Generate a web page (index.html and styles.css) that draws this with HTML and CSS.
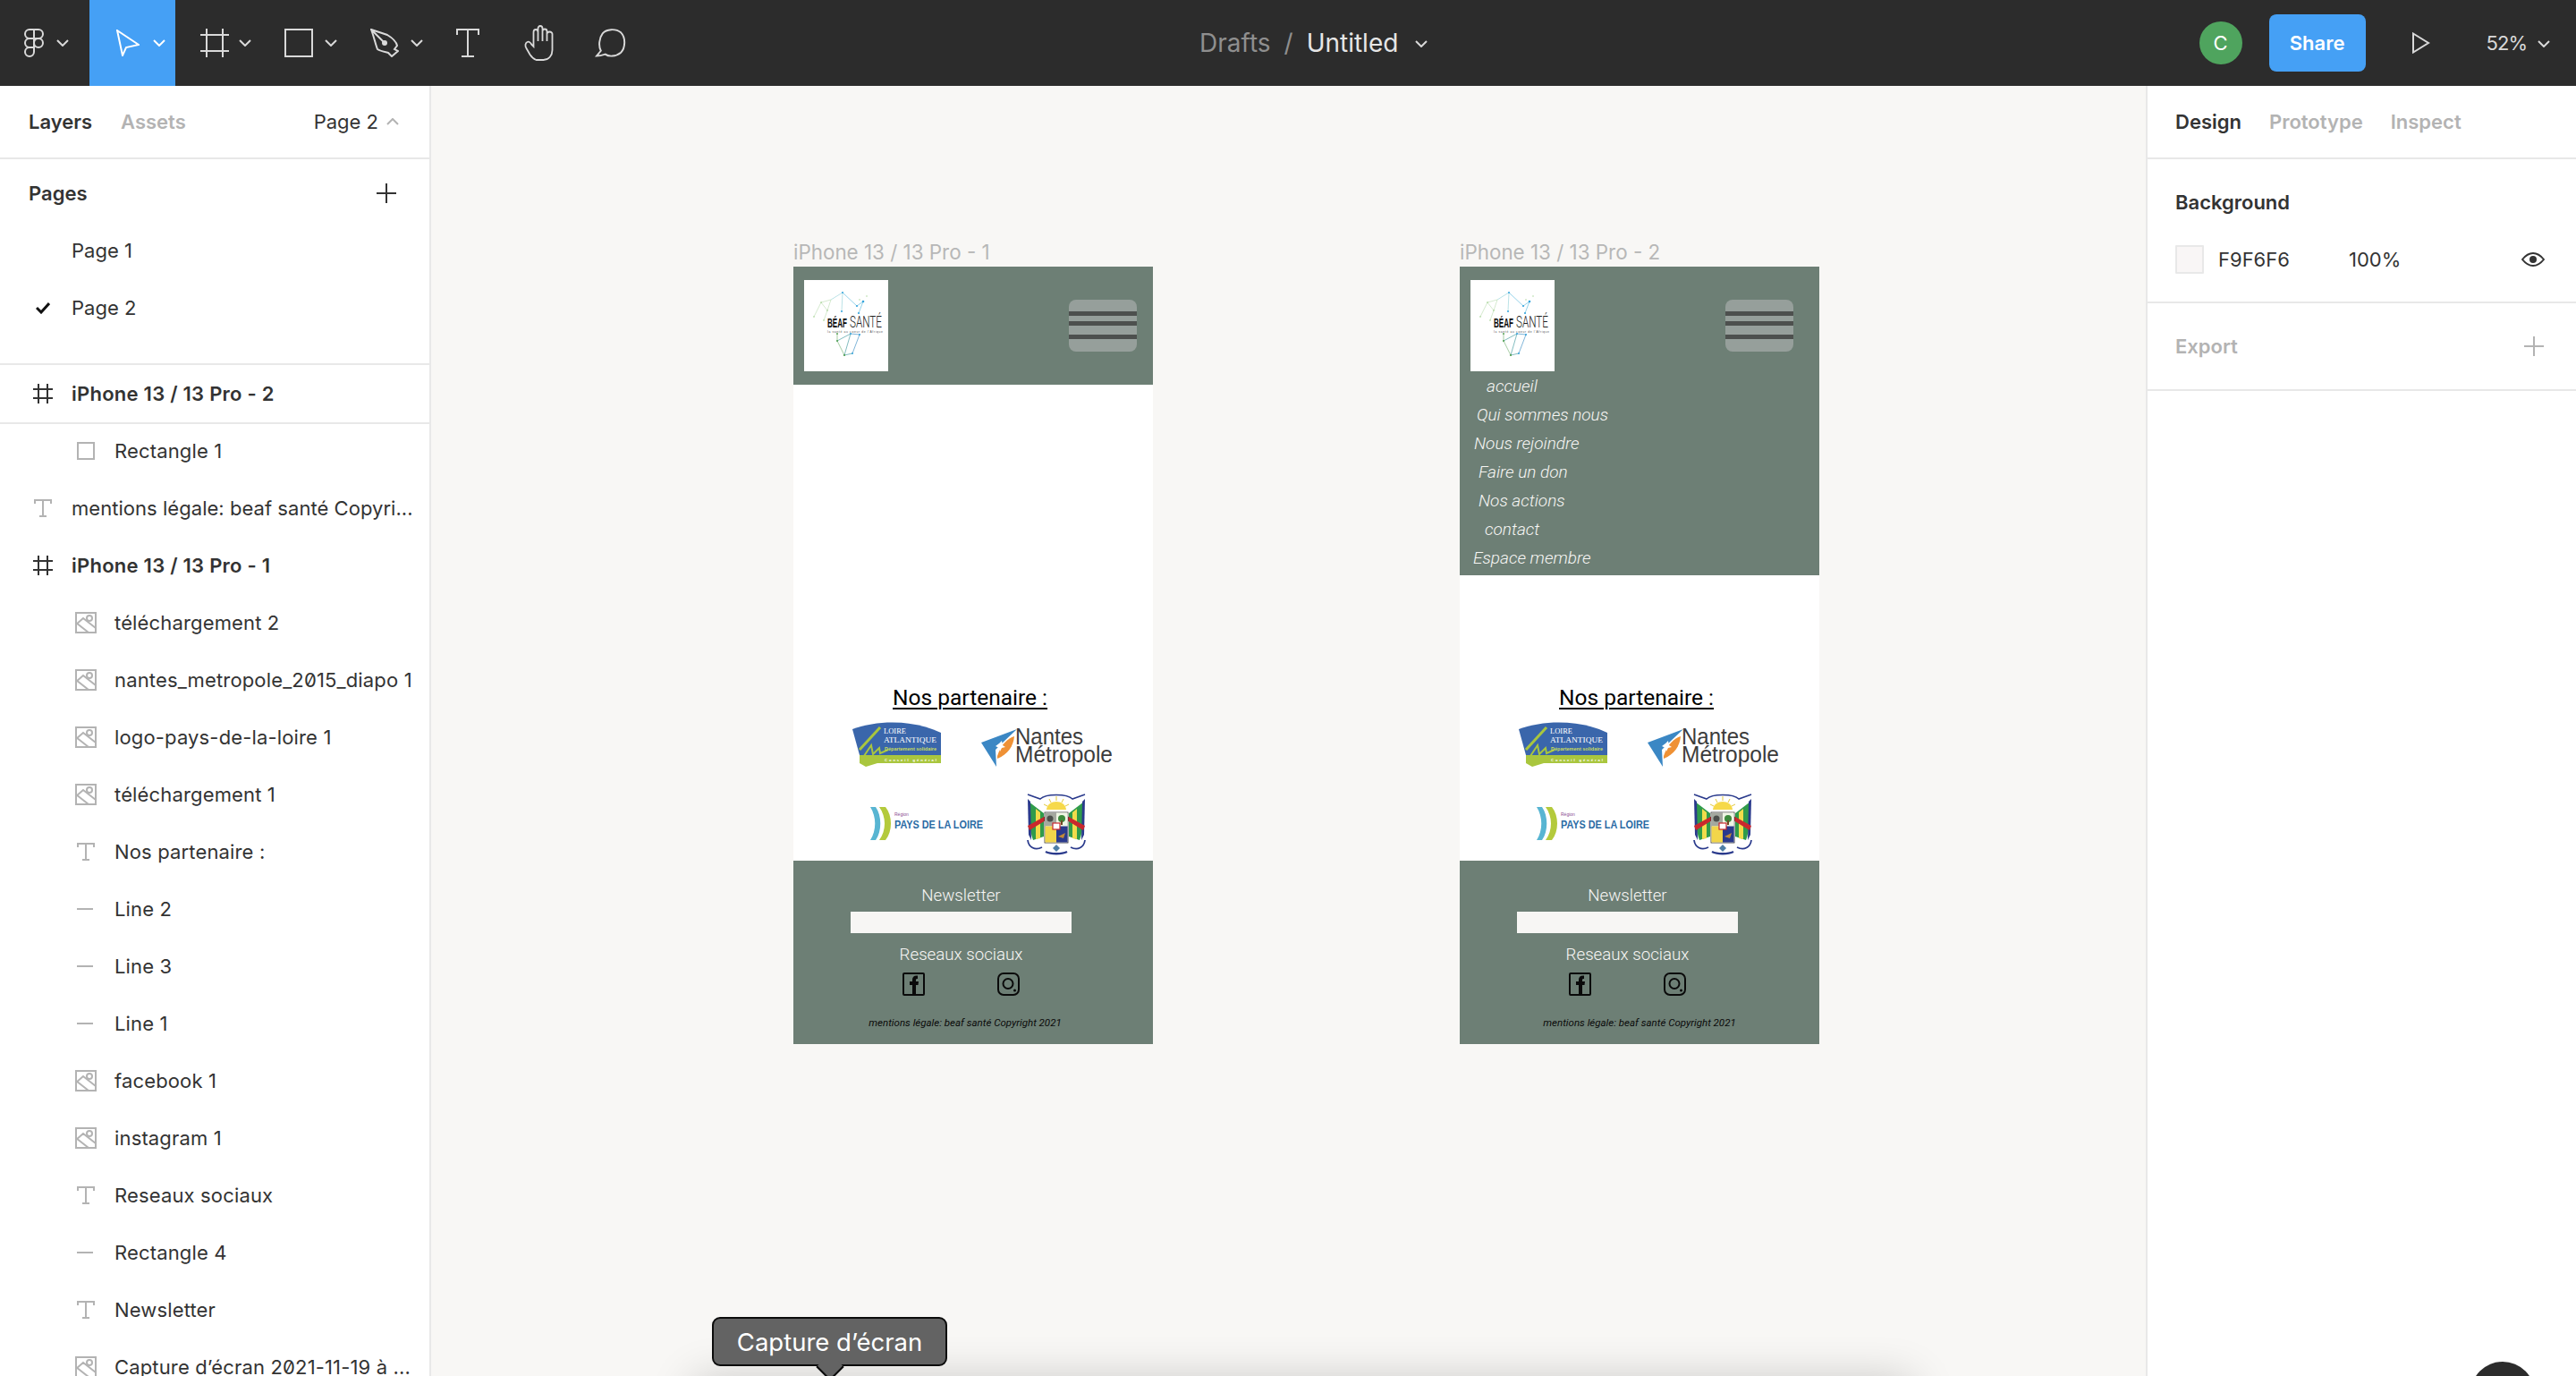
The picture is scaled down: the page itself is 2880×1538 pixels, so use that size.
FILE: index.html
```html
<!DOCTYPE html>
<html lang="fr">
<head>
<meta charset="utf-8">
<title>Untitled - Figma</title>
<link rel="stylesheet" href="styles.css">
</head>
<body>
<svg class="defs" width="0" height="0" aria-hidden="true">
  <defs>
    <symbol id="beaf" viewBox="0 0 94 102">
      <g fill="none" stroke-width=".6">
        <path stroke="#b9dcae" d="M11 41 19 25 30 22 26 34 22 45M19 25 26 34"/>
        <path stroke="#8fd0d6" d="M30 22 43 14 42 35"/>
        <path stroke="#4fb5dc" d="M43 14 59 29 66 24 61 37"/>
        <path stroke="#6bab6a" d="M37 60 37 68 45 84"/>
        <path stroke="#2f8f93" d="M37 68 52 60 45 84 54 82"/>
        <path stroke="#2a83bd" d="M52 60 62 61 54 82"/>
      </g>
      <g fill="#9ed08a">
        <circle cx="11" cy="41" r=".8"/><circle cx="19" cy="25" r=".8"/><circle cx="26" cy="34" r=".8"/><circle cx="22" cy="45" r=".8"/><circle cx="62" cy="22" r=".7"/><circle cx="70" cy="18" r=".7"/>
      </g>
      <g fill="#36a4dc">
        <circle cx="43" cy="14" r="1"/><circle cx="42" cy="35" r="1"/><circle cx="59" cy="29" r="1.1"/><circle cx="66" cy="24" r="1.3"/><circle cx="61" cy="37" r="1.1"/><circle cx="52" cy="60" r="1"/><circle cx="62" cy="61" r="1.1"/><circle cx="54" cy="82" r="1"/>
      </g>
      <g fill="#4e9d4c">
        <circle cx="37" cy="60" r=".9"/><circle cx="37" cy="68" r="1"/><circle cx="45" cy="84" r="1.1"/>
      </g>
      <text class="logo-bold" x="26" y="52.5" font-size="15.500" textLength="22" lengthAdjust="spacingAndGlyphs">BÉAF</text>
      <text class="logo-light" x="51" y="52.5" font-size="17.500" textLength="36" lengthAdjust="spacingAndGlyphs">SANTÉ</text>
      <text class="logo-tiny" x="26" y="58.5" font-size="3.4" textLength="62">la santé au coeur de l'Afrique</text>
    </symbol>

    <symbol id="menu-icon" viewBox="0 0 76 58">
      <rect width="76" height="58" rx="8" fill="#969f9b"/>
      <rect y="13" width="76" height="5" fill="#4d504e"/>
      <rect y="24" width="76" height="5" fill="#4d504e"/>
      <rect y="39" width="76" height="5" fill="#4d504e"/>
    </symbol>

    <symbol id="loire" viewBox="0 0 99 50">
      <path fill="#3a66ab" d="M0 8C30 -3 70 -2 99 12V37H8Z"/>
      <path fill="#a9c63e" d="M8 37H99V46H28L15 50 8 46Z"/>
      <path fill="none" stroke="#a9c63e" stroke-width="3" d="M31 6 8 31"/>
      <path fill="none" stroke="#a9c63e" stroke-width="2" d="M13 38 21 26 23 36 30 29 31 35 40 31"/>
      <text class="logo-serif" x="35" y="13" font-size="8.500">LOIRE</text>
      <text class="logo-serif" x="35" y="23" font-size="8.500" textLength="59" lengthAdjust="spacingAndGlyphs">ATLANTIQUE</text>
      <text class="logo-green" x="36" y="31.500" font-size="5" textLength="58" lengthAdjust="spacingAndGlyphs">Département solidaire</text>
      <text class="logo-white-b" x="36" y="44" font-size="4.200" textLength="58">Conseil général</text>
    </symbol>

    <symbol id="nantes" viewBox="0 0 147 45">
      <path fill="#3b87c4" d="M0 18 40 3 24 18 16 26 17 45Z"/>
      <path fill="#ef9135" d="M18 33C22 20 30 13 37 11 36 22 30 31 18 36Z"/>
      <path fill="#fff" d="M20 19 23 16 24 21 27 23 23 24 21 28 20 24 16 22Z"/>
      <text class="logo-sans" x="38" y="20" font-size="26" textLength="76" lengthAdjust="spacingAndGlyphs">Nantes</text>
      <text class="logo-sans" x="38" y="40" font-size="26" textLength="109" lengthAdjust="spacingAndGlyphs">Métropole</text>
    </symbol>

    <symbol id="pays" viewBox="0 0 126 37">
      <path fill="#58b5d2" d="M0 0H6C13 10 13 27 6 37H0C7 26 7 11 0 0Z"/>
      <path fill="#b4ca3c" d="M10 0H17C25 10 25 27 17 37H10C18 26 18 11 10 0Z"/>
      <text class="logo-purple" x="27" y="10" font-size="5">Région</text>
      <text class="logo-blue" x="27" y="24" font-size="12.500" textLength="99" lengthAdjust="spacingAndGlyphs">PAYS DE LA LOIRE</text>
    </symbol>

    <symbol id="arms" viewBox="0 0 72 71">
      <path fill="none" stroke="#2a3a8c" stroke-width="1.600" d="M4 3 18 8C24 2 48 2 54 8L68 3"/>
      <path fill="#f6d94a" d="M25 20C26 8 46 8 47 20Z"/>
      <path fill="none" stroke="#e3c93c" stroke-width="1" d="M36 5V10M28 8 30 12M44 8 42 12M22 14 26 16M50 14 46 16"/>
      <path fill="#2f9b4b" d="M5 11 22 24V50L10 54C6 44 5 26 5 11Z"/>
      <path fill="#f1dc4b" d="M13 19 18 23V52L13 53Z"/>
      <path fill="#2a3a8c" d="M4 8 7 11 8 54 5 48Z"/>
      <path fill="#2f9b4b" d="M67 11 50 24V50L62 54C66 44 67 26 67 11Z"/>
      <path fill="#f1dc4b" d="M59 19 54 23V52L59 53Z"/>
      <path fill="#2a3a8c" d="M68 8 65 11 64 54 67 48Z"/>
      <path fill="#c9282d" d="M4 38 24 27V32L6 43ZM68 38 48 27V32L66 43Z"/>
      <rect x="23" y="23" width="26" height="34" fill="#fff" stroke="#2b2b2b" stroke-width=".8"/>
      <rect x="23.500" y="23.500" width="12.500" height="15" fill="#a4a89f"/>
      <rect x="36" y="23.500" width="12.500" height="15" fill="#eef5e4"/>
      <rect x="23.500" y="38.500" width="12.500" height="18" fill="#f2d64a"/>
      <rect x="36" y="38.500" width="12.500" height="18" fill="#2a3a8c"/>
      <circle cx="29" cy="30" r="3.500" fill="#4c4f4c"/>
      <circle cx="42" cy="30" r="4" fill="#3d8b3d"/>
      <rect x="41" y="32" width="2" height="5" fill="#6d4a23"/>
      <rect x="32" y="35" width="8" height="7" fill="#fff" stroke="#c9282d" stroke-width="1.200"/>
      <path fill="#c08a38" d="M38 50 46 46 44 52Z"/>
      <path fill="none" stroke="#2a3a8c" stroke-width="1.800" d="M4 54C5 62 12 66 20 62M68 54C67 62 60 66 52 62"/>
      <path fill="none" stroke="#2a3a8c" stroke-width="2.400" d="M24 67C30 70 42 70 48 67"/>
      <path fill="#4f7fa6" d="M36 59 40 63 36 67 32 63Z"/>
    </symbol>

    <symbol id="ic-image" viewBox="0 0 24 24">
      <path fill="none" stroke="#b3b3b3" stroke-width="2" d="M1 1H23V23H1ZM1 12 15 23M1 14 9 7 23 18"/>
      <circle cx="16" cy="7" r="3" fill="none" stroke="#b3b3b3" stroke-width="2"/>
    </symbol>
    <symbol id="ic-t" viewBox="0 0 20 20">
      <path fill="none" stroke="#b3b3b3" stroke-width="2" d="M1 5V1H19V5M10 1V19M6 19H14"/>
    </symbol>
    <symbol id="ic-frame" viewBox="0 0 22 22">
      <path fill="none" stroke="#333" stroke-width="2" d="M6 0V22M16 0V22M0 6H22M0 16H22"/>
    </symbol>
    <symbol id="ic-line" viewBox="0 0 20 4">
      <rect y="1" width="18" height="2" fill="#b3b3b3"/>
    </symbol>
    <symbol id="chev" viewBox="0 0 14 8">
      <path fill="none" stroke="currentColor" stroke-width="2" d="M1 1 7 7 13 1"/>
    </symbol>
  </defs>
</svg>

<div class="app">
  <header class="topbar">
    <div class="tools">
      <div class="tool tool-logo">
        <svg class="ic" width="22" height="32" viewBox="0 0 22 32"><path fill="none" stroke="#d9d9d9" stroke-width="2" d="M11 1H6a5 5 0 0 0 0 10h5zM11 1h5a5 5 0 0 1 0 10h-5zM11 11H6a5 5 0 0 0 0 10h5zM21 16a5 5 0 1 1-10 0 5 5 0 0 1 10 0zM11 21H6a5 5 0 1 0 5 5z"/></svg>
        <svg class="chev" width="14" height="8"><use href="#chev"/></svg>
      </div>
      <div class="tool tool-move">
        <svg class="ic" width="26" height="30" viewBox="0 0 26 30"><path fill="none" stroke="#fff" stroke-width="2" d="M1 1 25 17 11 20 7 29Z"/></svg>
        <svg class="chev" width="14" height="8"><use href="#chev"/></svg>
      </div>
      <div class="tool tool-frame">
        <svg class="ic" width="32" height="32" viewBox="0 0 32 32"><path fill="none" stroke="#d9d9d9" stroke-width="2" d="M7 0V32M25 0V32M0 7H32M0 25H32"/></svg>
        <svg class="chev" width="14" height="8"><use href="#chev"/></svg>
      </div>
      <div class="tool">
        <svg class="ic" width="32" height="32" viewBox="0 0 32 32"><rect x="1" y="1" width="30" height="30" fill="none" stroke="#d9d9d9" stroke-width="2"/></svg>
        <svg class="chev" width="14" height="8"><use href="#chev"/></svg>
      </div>
      <div class="tool">
        <svg class="ic" width="32" height="32" viewBox="0 0 32 32"><path fill="none" stroke="#d9d9d9" stroke-width="2" d="M1 1 19 7C24 10 29 14 30 19L27 23 31 25 24 31 20 27C16 26 11 25 8 23 6 18 4 9 1 1ZM1 1 15 15"/><circle cx="16" cy="16" r="3" fill="#d9d9d9"/></svg>
        <svg class="chev" width="14" height="8"><use href="#chev"/></svg>
      </div>
      <div class="tool tool-text">
        <svg class="ic" width="26" height="32" viewBox="0 0 26 32"><path fill="none" stroke="#d9d9d9" stroke-width="2" d="M1 7V1H25V7M13 1V31M6 31H20"/></svg>
      </div>
      <div class="tool tool-hand">
        <svg class="ic" width="35" height="40" viewBox="0 0 32 40"><path fill="none" stroke="#d9d9d9" stroke-width="1.800" d="M13 39C10 38 8 36 6 33L2 26C0 23 1 20 3 19 5 18 7 20 8 22L10 24V8C10 6 11 5 12.500 5 14 5 15 6 15 8V4C15 2 16 1 17.500 1 19 1 20 2 20 4V7C20 5.500 21 4.500 22.500 4.500 24 4.500 25 5.500 25 7V10C25 8.500 26.500 7.500 28 7.500 30 7.500 31 9 31 10V28C31 34 27 39 21 39ZM15 8V18M20 4V18M25 7V18"/></svg>
      </div>
      <div class="tool tool-comment">
        <svg class="ic" width="35" height="32" viewBox="0 0 36 32"><path fill="none" stroke="#d9d9d9" stroke-width="2" d="M2 31 7 25C4 20 5 10 9 5 13 0 24-1 30 4 36 10 35 22 30 27 24 32 16 32 12 29 9 30 5 31 2 31Z"/></svg>
      </div>
    </div>
    <div class="title">
      <span class="crumb">Drafts</span>
      <span class="crumb crumb-sep">/</span>
      <span class="doc">Untitled</span>
      <svg class="chev chev-doc" width="14" height="8"><use href="#chev"/></svg>
    </div>
    <div class="top-right">
      <div class="avatar">C</div>
      <div class="share">Share</div>
      <svg class="play" width="20" height="24" viewBox="0 0 20 24"><path fill="none" stroke="#d9d9d9" stroke-width="2" d="M1 1.500 18 12 1 22.500Z"/></svg>
      <span class="zoom">52%</span>
      <svg class="chev chev-zoom" width="14" height="8"><use href="#chev"/></svg>
    </div>
  </header>

  <div class="workspace">
    <aside class="left">
      <div class="tabs">
        <span class="tab-on">Layers</span>
        <span class="tab-off">Assets</span>
        <span class="page-pick">Page 2</span>
        <svg class="chev-up" width="14" height="8"><use href="#chev"/></svg>
      </div>
      <section class="pages">
        <div class="pages-head">
          <span class="strong">Pages</span>
          <svg width="22" height="22" viewBox="0 0 22 22"><path fill="none" stroke="#333" stroke-width="2" d="M11 0V22M0 11H22"/></svg>
        </div>
        <div class="page-row">Page 1</div>
        <div class="page-row">
          <svg class="check" width="16" height="14" viewBox="0 0 16 14"><path fill="none" stroke="#111" stroke-width="3" d="M1 7 6 12 15 2"/></svg>
          Page 2
        </div>
      </section>
      <div class="layers">
        <div class="layer layer-top layer-selected"><svg class="li" width="22" height="22"><use href="#ic-frame"/></svg><span class="strong">iPhone 13 / 13 Pro - 2</span></div>
        <div class="layer layer-child layer-first"><svg class="li" width="20" height="20" viewBox="0 0 20 20"><rect x="1" y="1" width="18" height="18" fill="none" stroke="#b3b3b3" stroke-width="2"/></svg><span>Rectangle 1</span></div>
        <div class="layer layer-top layer-note"><svg class="li" width="20" height="20"><use href="#ic-t"/></svg><span>mentions légale: beaf santé Copyri...</span></div>
        <div class="layer layer-top"><svg class="li" width="22" height="22"><use href="#ic-frame"/></svg><span class="strong">iPhone 13 / 13 Pro - 1</span></div>
        <div class="layer layer-child"><svg class="li" width="24" height="24"><use href="#ic-image"/></svg><span>téléchargement 2</span></div>
        <div class="layer layer-child"><svg class="li" width="24" height="24"><use href="#ic-image"/></svg><span>nantes_metropole_2015_diapo 1</span></div>
        <div class="layer layer-child"><svg class="li" width="24" height="24"><use href="#ic-image"/></svg><span>logo-pays-de-la-loire 1</span></div>
        <div class="layer layer-child"><svg class="li" width="24" height="24"><use href="#ic-image"/></svg><span>téléchargement 1</span></div>
        <div class="layer layer-child"><svg class="li" width="20" height="20"><use href="#ic-t"/></svg><span>Nos partenaire :</span></div>
        <div class="layer layer-child"><svg class="li" width="20" height="4"><use href="#ic-line"/></svg><span>Line 2</span></div>
        <div class="layer layer-child"><svg class="li" width="20" height="4"><use href="#ic-line"/></svg><span>Line 3</span></div>
        <div class="layer layer-child"><svg class="li" width="20" height="4"><use href="#ic-line"/></svg><span>Line 1</span></div>
        <div class="layer layer-child"><svg class="li" width="24" height="24"><use href="#ic-image"/></svg><span>facebook 1</span></div>
        <div class="layer layer-child"><svg class="li" width="24" height="24"><use href="#ic-image"/></svg><span>instagram 1</span></div>
        <div class="layer layer-child"><svg class="li" width="20" height="20"><use href="#ic-t"/></svg><span>Reseaux sociaux</span></div>
        <div class="layer layer-child"><svg class="li" width="20" height="4"><use href="#ic-line"/></svg><span>Rectangle 4</span></div>
        <div class="layer layer-child"><svg class="li" width="20" height="20"><use href="#ic-t"/></svg><span>Newsletter</span></div>
        <div class="layer layer-child"><svg class="li" width="24" height="24"><use href="#ic-image"/></svg><span>Capture d’écran 2021-11-19 à ...</span></div>
      </div>
    </aside>

    <main class="canvas">
      <article class="phone phone-one">
        <div class="phone-label">iPhone 13 / 13 Pro - 1</div>
        <div class="ph-head">
          <div class="ph-top">
            <svg class="ph-logo"><use href="#beaf"/></svg>
            <svg class="ph-menu"><use href="#menu-icon"/></svg>
          </div>
        </div>
        <div class="ph-body">
          <h2 class="partners">Nos partenaire :</h2>
          <div class="logos logos-a">
            <svg class="lg-loire"><use href="#loire"/></svg>
            <svg class="lg-nantes"><use href="#nantes"/></svg>
          </div>
          <div class="logos logos-b">
            <svg class="lg-pays"><use href="#pays"/></svg>
            <svg class="lg-arms"><use href="#arms"/></svg>
          </div>
        </div>
        <footer class="ph-foot">
          <div class="ft-title">Newsletter</div>
          <div class="ft-input"></div>
          <div class="ft-title ft-social">Reseaux sociaux</div>
          <div class="ft-icons">
            <svg width="25" height="26" viewBox="0 0 25 26"><rect x="1" y="1" width="23" height="24" rx="1" fill="none" stroke="#0a0a0a" stroke-width="2"/><path fill="#0a0a0a" d="M11 25V14H8V10H11V8C11 5 13 3 17 3.500V7C15 7 15 7.500 15 9V10H18L17.500 14H15V25Z"/></svg>
            <svg width="25" height="26" viewBox="0 0 25 26"><rect x="1" y="1" width="23" height="24" rx="6" fill="none" stroke="#0a0a0a" stroke-width="2"/><circle cx="12" cy="12.500" r="5.500" fill="none" stroke="#0a0a0a" stroke-width="2"/><circle cx="19.500" cy="20" r="1.500" fill="#0a0a0a"/></svg>
          </div>
          <div class="ft-legal">mentions légale: beaf santé Copyright 2021</div>
        </footer>
      </article>

      <article class="phone phone-two">
        <div class="phone-label">iPhone 13 / 13 Pro - 2</div>
        <div class="ph-head">
          <div class="ph-top">
            <svg class="ph-logo"><use href="#beaf"/></svg>
            <svg class="ph-menu"><use href="#menu-icon"/></svg>
          </div>
          <nav class="ph-nav">
            <div class="nav-item n-accueil">accueil</div>
            <div class="nav-item n-qui">Qui sommes nous</div>
            <div class="nav-item n-nous">Nous rejoindre</div>
            <div class="nav-item n-faire">Faire un don</div>
            <div class="nav-item n-actions">Nos actions</div>
            <div class="nav-item n-contact">contact</div>
            <div class="nav-item n-espace">Espace membre</div>
          </nav>
        </div>
        <div class="ph-body">
          <h2 class="partners">Nos partenaire :</h2>
          <div class="logos logos-a">
            <svg class="lg-loire"><use href="#loire"/></svg>
            <svg class="lg-nantes"><use href="#nantes"/></svg>
          </div>
          <div class="logos logos-b">
            <svg class="lg-pays"><use href="#pays"/></svg>
            <svg class="lg-arms"><use href="#arms"/></svg>
          </div>
        </div>
        <footer class="ph-foot">
          <div class="ft-title">Newsletter</div>
          <div class="ft-input"></div>
          <div class="ft-title ft-social">Reseaux sociaux</div>
          <div class="ft-icons">
            <svg width="25" height="26" viewBox="0 0 25 26"><rect x="1" y="1" width="23" height="24" rx="1" fill="none" stroke="#0a0a0a" stroke-width="2"/><path fill="#0a0a0a" d="M11 25V14H8V10H11V8C11 5 13 3 17 3.500V7C15 7 15 7.500 15 9V10H18L17.500 14H15V25Z"/></svg>
            <svg width="25" height="26" viewBox="0 0 25 26"><rect x="1" y="1" width="23" height="24" rx="6" fill="none" stroke="#0a0a0a" stroke-width="2"/><circle cx="12" cy="12.500" r="5.500" fill="none" stroke="#0a0a0a" stroke-width="2"/><circle cx="19.500" cy="20" r="1.500" fill="#0a0a0a"/></svg>
          </div>
          <div class="ft-legal">mentions légale: beaf santé Copyright 2021</div>
        </footer>
      </article>

      <div class="dock-shadow"></div>
      <div class="dock-tip">Capture d’écran</div>
    </main>

    <aside class="right">
      <div class="tabs tabs-right">
        <span class="tab-on">Design</span>
        <span class="tab-off">Prototype</span>
        <span class="tab-off">Inspect</span>
      </div>
      <section class="bg-section">
        <div class="strong bg-title">Background</div>
        <div class="bg-row">
          <span class="swatch"></span>
          <span class="hex">F9F6F6</span>
          <span class="pct">100%</span>
          <svg class="eye" width="26" height="16" viewBox="0 0 26 16"><path fill="none" stroke="#333" stroke-width="2" d="M1 8C5 3 9 1 13 1S21 3 25 8C21 13 17 15 13 15S5 13 1 8Z"/><circle cx="13" cy="8" r="4" fill="#333"/></svg>
        </div>
      </section>
      <section class="export-section">
        <span class="tab-off">Export</span>
        <svg width="22" height="22" viewBox="0 0 22 22"><path fill="none" stroke="#b3b3b3" stroke-width="2" d="M11 0V22M0 11H22"/></svg>
      </section>
      <div class="help"></div>
    </aside>
  </div>
</div>
</body>
</html>
```

FILE: styles.css
```css
* { box-sizing: border-box; }
html, body { margin: 0; padding: 0; }
body {
  width: 2880px;
  height: 1538px;
  overflow: hidden;
  font-family: Inter, "Noto Sans", sans-serif;
  font-size: 22px;
  color: #333;
  background: #f8f7f5;
}
.defs { position: absolute; }
.app { display: flex; flex-direction: column; height: 1538px; }

/* Top bar */
.topbar {
  display: flex;
  align-items: center;
  height: 96px;
  flex: none;
  background: #2c2c2c;
  color: #d9d9d9;
}
.tools { display: flex; width: 1341px; flex: none; }
.tool {
  display: flex;
  align-items: center;
  gap: 13px;
  width: 96px;
  height: 96px;
  padding-left: 26px;
}
.tool svg { flex: none; }
.tool-logo { width: 100px; padding-left: 27px; gap: 14px; }
.tool-move { background: #45a0f5; padding-left: 30px; gap: 15px; color: #fff; }
.tool-frame { padding-left: 28px; gap: 11px; }
.tool-text { width: 74px; }
.tool-hand { width: 80px; padding-left: 27px; }
.tool-comment { width: 80px; padding-left: 27px; }
.title { display: flex; align-items: center; font-size: 28px; }
.crumb { color: #8f8f8f; }
.crumb-sep { margin: 0 15px; }
.doc { color: #e6e6e6; }
.chev-doc { margin-left: 19px; margin-top: 2px; }
.top-right { display: flex; align-items: center; margin-left: auto; padding-right: 29px; }
.avatar {
  width: 48px;
  height: 48px;
  border-radius: 50%;
  background: #4fa45e;
  color: #fff;
  display: flex;
  align-items: center;
  justify-content: center;
  font-size: 22px;
}
.share {
  width: 108px;
  height: 64px;
  margin-left: 30px;
  border-radius: 8px;
  background: #45a0f5;
  color: #fff;
  font-weight: 600;
  font-size: 22px;
  display: flex;
  align-items: center;
  justify-content: center;
}
.play { margin-left: 52px; }
.zoom { margin-left: 63px; font-size: 22px; letter-spacing: -1px; }
.chev-zoom { margin-left: 12px; margin-top: 2px; }

/* Workspace */
.workspace { display: flex; flex: 1; min-height: 0; }
.left {
  width: 482px;
  flex: none;
  background: #fff;
  border-right: 2px solid #e8e8e8;
  overflow: hidden;
}
.right {
  width: 481px;
  flex: none;
  position: relative;
  background: #fff;
  border-left: 2px solid #e8e8e8;
  overflow: hidden;
}
.canvas { flex: 1; position: relative; overflow: hidden; background: #f8f7f5; }

/* Panels */
.tabs {
  display: flex;
  align-items: center;
  height: 82px;
  padding-left: 32px;
  border-bottom: 2px solid #e8e8e8;
}
.tab-on { font-weight: 600; color: #333; }
.tab-off { font-weight: 600; color: #b3b3b3; }
.tabs .tab-off { margin-left: 32px; }
.page-pick { margin-left: auto; }
.chev-up { color: #b3b3b3; transform: rotate(180deg); margin: 0 34px 0 9px; }
.tabs-right { padding-left: 31px; }
.tabs-right .tab-off { margin-left: 31px; }
.strong { font-weight: 600; color: #333; }

.pages { height: 230px; padding-top: 6px; border-bottom: 2px solid #e8e8e8; }
.pages-head {
  display: flex;
  align-items: center;
  justify-content: space-between;
  height: 64px;
  padding: 0 37px 0 32px;
}
.page-row { position: relative; display: flex; align-items: center; height: 64px; padding-left: 80px; }
.check { position: absolute; left: 40px; top: 25px; }

.layer {
  display: flex;
  align-items: center;
  height: 64px;
  white-space: nowrap;
  letter-spacing: 0.15px;
  font-feature-settings: "zero";
}
.layer .strong { letter-spacing: 0.25px; }
.layer-note { letter-spacing: 0.04px; }
.li { flex: none; }
.layer-top { padding-left: 36px; }
.layer-top .li { width: 24px; margin-right: 20px; }
.layer-child { padding-left: 84px; }
.layer-child .li { width: 24px; margin-right: 20px; }
.layer-selected { border-bottom: 2px solid #e8e8e8; height: 66px; }
.layer-first { margin-top: -2px; }

/* Right panel sections */
.bg-section { height: 161px; padding: 35px 0 0 31px; border-bottom: 2px solid #e8e8e8; }
.bg-title { height: 27px; line-height: 27px; }
.bg-row { display: flex; align-items: center; height: 32px; margin-top: 34px; }
.swatch { width: 32px; height: 32px; background: #f9f6f6; border: 2px solid #e8e8e8; border-radius: 1px; }
.hex { margin-left: 16px; width: 146px; }
.pct { width: 193px; }
.export-section {
  display: flex;
  align-items: center;
  justify-content: space-between;
  height: 98px;
  padding: 0 36px 0 31px;
  border-bottom: 2px solid #e8e8e8;
}
.help {
  position: absolute;
  left: 361px;
  top: 1426px;
  width: 72px;
  height: 72px;
  border-radius: 50%;
  background: #2c2c2c;
}

/* Phones on the canvas */
.phone { position: absolute; top: 202px; width: 402px; height: 869px; display: flex; flex-direction: column; background: #fff; }
.phone-one { left: 405px; }
.phone-two { left: 1150px; }
.phone-label { position: absolute; left: 0; top: -29px; line-height: 26px; white-space: nowrap; color: #b7b7b7; font-size: 22.400px; }
.ph-head { flex: none; background: #6d7f75; height: 132px; }
.phone-two .ph-head { height: 345px; }
.ph-top { display: flex; justify-content: space-between; align-items: flex-start; padding: 15px 18px 0 12px; }
.phone-two .ph-top { padding-right: 29px; }
.ph-logo { width: 94px; height: 102px; background: #fff; }
.ph-menu { width: 76px; height: 58px; margin-top: 22px; }
.ph-nav { margin-top: 1px; font-family: Roboto, sans-serif; font-style: italic; font-weight: 300; font-size: 19px; color: #f7f6f4; }
.nav-item { height: 32px; line-height: 32px; }
.n-accueil { padding-left: 30px; }
.n-qui { padding-left: 19px; }
.n-nous { padding-left: 16px; }
.n-faire { padding-left: 21px; }
.n-actions { padding-left: 21px; }
.n-contact { padding-left: 28px; }
.n-espace { padding-left: 15px; }

.ph-body { flex: 1; display: flex; flex-direction: column; justify-content: flex-end; padding-bottom: 6px; }
.partners {
  margin: 0 0 0 111px;
  font-family: Roboto, sans-serif;
  font-weight: 400;
  font-size: 24.500px;
  line-height: 30px;
  color: #000;
  text-decoration: underline;
  text-underline-offset: 3px;
  text-decoration-thickness: 1.500px;
}
.logos { display: flex; }
.logos-a { margin-top: 12px; padding-left: 66px; gap: 45px; align-items: flex-end; }
.logos-b { margin-top: 28px; padding-left: 86px; gap: 46px; align-items: center; }
.lg-loire { width: 99px; height: 50px; }
.lg-nantes { width: 147px; height: 45px; }
.lg-pays { width: 126px; height: 37px; }
.lg-arms { width: 72px; height: 71px; }

.ph-foot {
  flex: none;
  height: 205px;
  padding: 27px 27px 0 0;
  background: #6d7f75;
  display: flex;
  flex-direction: column;
  align-items: center;
  font-family: Roboto, sans-serif;
}
.ft-title { font-size: 18.700px; line-height: 24px; font-weight: 300; color: #f7f6f4; }
.ft-input { width: 247px; height: 24px; margin-top: 6px; background: #f7f6f4; }
.ft-social { margin-top: 12px; }
.ft-icons { display: flex; gap: 81px; margin-top: 8px; height: 26px; }
.ft-legal { margin-top: 22px; margin-left: 9px; font-size: 11.500px; line-height: 16px; font-style: italic; color: #0a0a0a; white-space: nowrap; }
.phone-two .ft-legal { margin-left: 27px; }

/* Dock overlay */
.dock-shadow {
  position: absolute;
  left: 300px;
  top: 1452px;
  width: 1350px;
  height: 40px;
  box-shadow: 0 0 50px 6px rgba(0, 0, 0, 0.2);
  background: #ddd;
}
.dock-tip {
  position: absolute;
  left: 314px;
  top: 1376px;
  width: 263px;
  height: 55px;
  display: flex;
  align-items: center;
  justify-content: center;
  background: #636363;
  border: 2px solid #0c0c0c;
  border-radius: 9px;
  color: #fff;
  font-size: 27.500px;
}
.dock-tip::after {
  content: "";
  position: absolute;
  left: 119px;
  bottom: -14px;
  width: 20px;
  height: 20px;
  background: #636363;
  border-right: 2px solid #0c0c0c;
  border-bottom: 2px solid #0c0c0c;
  transform: rotate(45deg);
}

/* SVG logo text */
.logo-bold { font-family: "Liberation Sans", sans-serif; font-weight: 700; fill: #0a0a0a; }
.logo-light { font-family: Roboto, sans-serif; font-weight: 300; fill: #222; }
.logo-tiny { font-family: "Liberation Sans", sans-serif; fill: #555; }
.logo-serif { font-family: "Liberation Serif", serif; fill: #fff; }
.logo-green { font-family: "Liberation Sans", sans-serif; font-weight: 700; fill: #c8dc5a; }
.logo-white-b { font-family: "Liberation Sans", sans-serif; font-weight: 700; fill: #fff; }
.logo-sans { font-family: "Liberation Sans", sans-serif; fill: #3c3c3c; }
.logo-purple { font-family: "Liberation Sans", sans-serif; fill: #8a4d93; }
.logo-blue { font-family: "Liberation Sans", sans-serif; font-weight: 700; fill: #2a6ca5; }
```
